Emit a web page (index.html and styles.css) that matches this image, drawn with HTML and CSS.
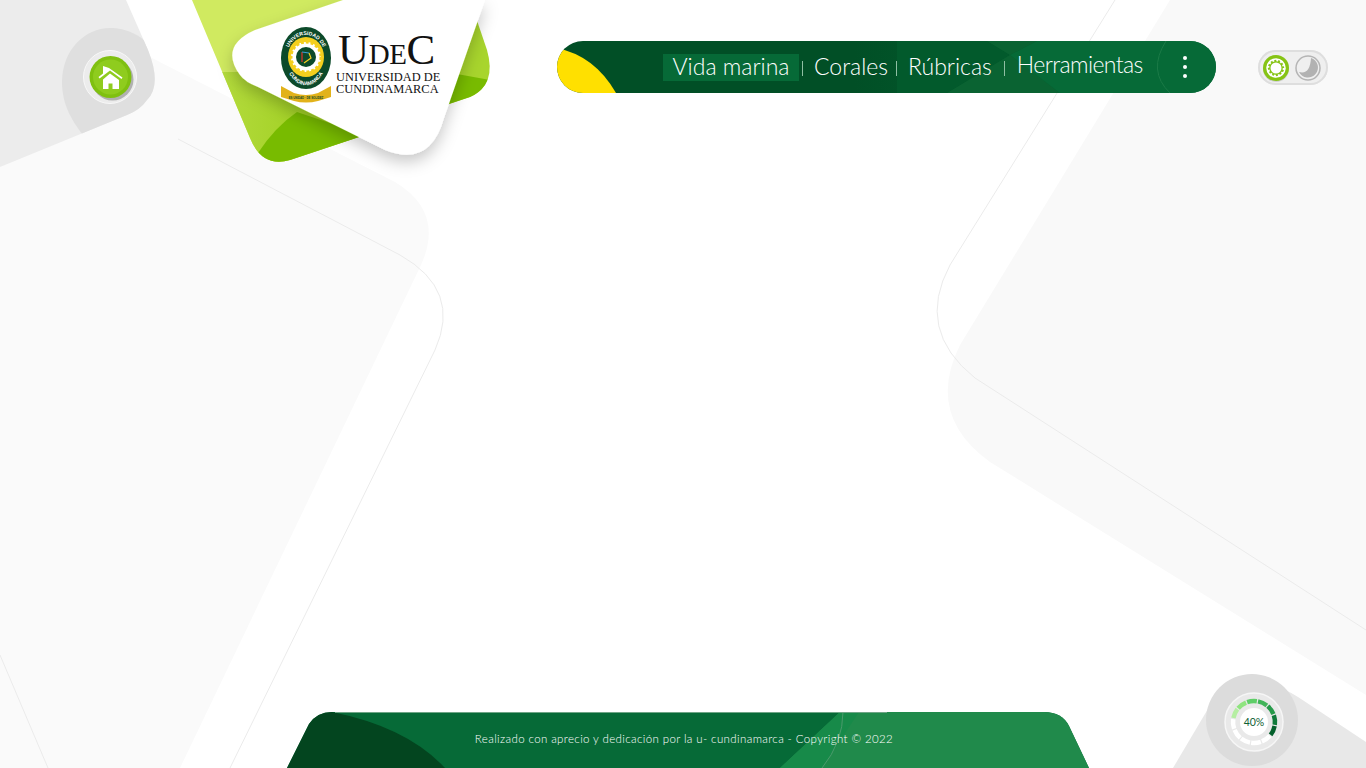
FILE: index.html
```html
<!DOCTYPE html>
<html lang="es">
<head>
  <meta charset="UTF-8" />
  <meta name="viewport" content="width=device-width, initial-scale=1.0"/>
  <title>Vida marina - UDEC</title>
  <link rel="stylesheet" href="styles.css">
</head>
<body>
  <svg class="fondo" viewBox="0 0 1366 768" aria-hidden="true">
    <defs>
      <clipPath id="clipEsquina"><path d="M0 0H126L148 50Q162 85 147 100Q140 110 127 115L0 167Z"/></clipPath>
      <clipPath id="clipVerde"><path d="M192 0H380V130L290 160Q262 168 250 138Z"/></clipPath>
      <clipPath id="clipVerde2"><path d="M470 0L487 50Q497 85 470 97L440 107V0Z"/></clipPath>
      <linearGradient id="gradBanda" x1="0" y1="0" x2="1" y2="0">
        <stop offset="0" stop-color="#b9de45"/>
        <stop offset="0.5" stop-color="#a6d32a"/>
        <stop offset="1" stop-color="#97c920"/>
      </linearGradient>
      <filter id="sombraLogo" x="-20%" y="-20%" width="140%" height="150%">
        <feDropShadow dx="0" dy="7" stdDeviation="8" flood-color="#000" flood-opacity="0.22"/>
      </filter>
    </defs>

    <path fill="#fafafa" d="M150 57L395 182Q445 212 421 265L180 768H0V167Z"/>
    <path fill="none" stroke="#ebebeb" d="M178 139L400 255Q462 290 435 350L230 768"/>
    <path fill="none" stroke="#ebebeb" d="M0 655L48 768"/>
    <path fill="#ececec" d="M0 0H126L148 50Q162 85 147 100Q140 110 127 115L0 167Z"/>
    <path fill="#dfdfdf" clip-path="url(#clipEsquina)" d="M62 82C62 50 85 28 110 28C130 28 160 40 160 80V140H87C72 122 62 105 62 82Z"/>

    <path fill="#f9f9f9" d="M1170 0H1366V695L990 462Q925 415 960 345Z"/>
    <path fill="none" stroke="#ebebeb" d="M1115 0L950 265Q915 330 975 378L1366 630"/>
    <path fill="#e8e8e8" d="M1173 768L1215 697Q1255 670 1298 697L1366 742V768Z"/>
    <circle fill="#dcdcdc" cx="1252" cy="720" r="46"/>

    <path fill="#d0ea60" d="M192 0H380V130L290 160Q262 168 250 138Z"/>
    <g clip-path="url(#clipVerde)">
      <rect x="190" y="72" width="190" height="100" fill="url(#gradBanda)"/>
      <path fill="#78bb00" d="M258 153Q275 127 297 112L380 140L300 175L250 170Z"/>
    </g>
    <path fill="#a8d52d" d="M470 0L487 50Q497 85 470 97L440 107V0Z"/>
    <path fill="#78bb00" clip-path="url(#clipVerde2)" d="M440 110L457 74L490 80V110Z"/>
    <path fill="#fff" filter="url(#sombraLogo)" d="M343 0L255 30Q219 46 240 75Q245 82 258 87L385 150Q430 168 444 118L485 0Z"/>
  </svg>

  <header class="cabecera">
    <a class="inicio" href="#" aria-label="Inicio">
      <svg viewBox="0 0 54 54" width="54" height="54">
        <circle cx="27" cy="27" r="26.500" fill="#ececec" stroke="#f8f8f8"/>
        <circle cx="29.500" cy="29.500" r="21" fill="#8a8a8a" opacity="0.6"/>
        <circle cx="27.500" cy="27" r="21" fill="#7fc010"/>
        <circle cx="27.500" cy="27" r="17.500" fill="#8fcc1e"/>
        <path fill="#fff" d="M20 16L26 18L39.500 27.500L38.500 29L27 20.500L16.500 28.500L15.500 27L20 23.500Z"/>
        <path fill="#fff" d="M20 29.500L27 23.500L36 30V39H29.500V33.500H25.500V39H20Z"/>
      </svg>
    </a>

    <div class="marca">
      <svg class="escudo" viewBox="0 0 52 78" width="52" height="78">
        <defs>
          <path id="arcoSup" d="M6.500 33A19.500 24 0 0 1 45.500 33"/>
          <path id="arcoInf" d="M4 38Q14 60 26 59Q38 60 48 38"/>
        </defs>
        <ellipse cx="26" cy="32" rx="25" ry="31" fill="#0c4a2a"/>
        <ellipse cx="26" cy="31" rx="18" ry="20" fill="#f4cf1e"/>
        <circle cx="26" cy="31" r="15" fill="#fff" stroke="#f4cf1e" stroke-width="3" stroke-dasharray="3 2"/>
        <circle cx="26" cy="31" r="10" fill="#0c4a2a"/>
        <path fill="none" stroke="#e5322d" stroke-width="1.200" d="M22 26V36"/>
        <path fill="none" stroke="#3a9fd8" stroke-width="1.200" d="M22 26L29 27"/>
        <path fill="none" stroke="#f4cf1e" stroke-width="1.200" d="M29 27L31 32L24 37"/>
        <text class="escudo-txt"><textPath href="#arcoSup" startOffset="50%">UNIVERSIDAD DE</textPath></text>
        <text class="escudo-txt"><textPath href="#arcoInf" startOffset="50%">CUNDINAMARCA</textPath></text>
        <path fill="#e2b21a" d="M1 60L14 67Q26 71 38 67L51 60V71L38 75Q26 78 14 75L1 71Z"/>
        <text class="escudo-lema" x="26" y="72.500">ES UNIDAD · DE SOLIDEZ</text>
      </svg>
      <div class="marca-texto">
        <div class="udec">U<span>DE</span>C</div>
        <div class="udec-nombre">UNIVERSIDAD DE</div>
        <div class="udec-nombre">CUNDINAMARCA</div>
      </div>
    </div>

    <nav class="menu">
      <svg class="menu-fondo" viewBox="0 0 659 52" width="659" height="52" aria-hidden="true">
        <defs>
          <linearGradient id="gradMenu" x1="0" y1="0" x2="1" y2="0">
            <stop offset="0.45" stop-color="#014f26"/>
            <stop offset="0.65" stop-color="#025a2c"/>
            <stop offset="0.8" stop-color="#066a37"/>
          </linearGradient>
        </defs>
        <rect width="659" height="52" fill="url(#gradMenu)"/>
        <path fill="#025a2c" d="M340 0H430L453 14L390 52H340Z"/>
        <path fill="#0a6332" d="M390 52L453 14L430 0H480L453 14L503 52Z"/>
        <path fill="#066a37" d="M480 0H659V52H503L453 14Z"/>
        <path fill="#ffe000" d="M0 7Q38 15 59 52H0Z"/>
        <path fill="none" stroke="#1b7a47" d="M609 0Q590 30 613 52"/>
      </svg>
      <a class="activo" href="#">Vida marina</a>
      <span class="sep sep-activo"></span>
      <a href="#">Corales</a>
      <span class="sep sep-corales"></span>
      <a href="#">Rúbricas</a>
      <span class="sep sep-rubricas"></span>
      <a class="alto" href="#">Herramientas</a>
      <button class="puntos" type="button" aria-label="Más"><i></i><i></i><i></i></button>
    </nav>

    <div class="tema">
      <svg viewBox="0 0 70 35" width="70" height="35">
        <circle cx="18" cy="19" r="13" fill="#999" opacity="0.35"/>
        <circle cx="18" cy="18" r="13" fill="#86c414"/>
        <circle cx="18" cy="18" r="9" fill="none" stroke="#fff" stroke-width="1.500"/>
        <circle cx="18" cy="18" r="5.500" fill="#fff"/>
        <circle cx="18" cy="18" r="8" fill="none" stroke="#fff" stroke-width="2.500" stroke-dasharray="2 2.200"/>
        <circle cx="50" cy="18" r="12" fill="#efefef" stroke="#b5b5b5" stroke-width="1.500"/>
        <path fill="#b2b2b2" d="M53 8A10 10 0 1 1 41 22Q52 25 53 8Z"/>
      </svg>
    </div>
  </header>

  <main class="contenido"></main>

  <footer class="pie">
    <svg class="pie-fondo" viewBox="0 0 802 56" width="802" height="56" aria-hidden="true">
      <path fill="#066a37" d="M0 56L22 12Q30 0 45 0H757Q775 0 782 14L802 56Z"/>
      <path fill="#03451f" d="M0 56L22 12Q30 0 45 0Q120 15 158 56Z"/>
      <path fill="#208a4b" d="M553 0H757Q775 0 782 14L802 56H493Z"/>
      <path fill="#178a49" d="M493 56L553 0H572L535 56Z"/>
      <path fill="none" stroke="#4b9a6c" d="M556 0Q556 30 535 56"/>
      <path fill="none" stroke="#6fa586" d="M48 0.500H600"/>
    </svg>
    <p>Realizado con aprecio y dedicación por la u- cundinamarca - Copyright © 2022</p>
  </footer>

  <div class="avance">
    <svg viewBox="0 0 60 60" width="60" height="60">
      <circle cx="30" cy="30" r="29" fill="#e9e9e9" stroke="#f6f6f6" stroke-width="1.500"/>
      <g fill="none" stroke-width="4.500" stroke-dasharray="9.800 122">
        <circle cx="30" cy="30" r="21" stroke="#b5eea2" transform="rotate(-169 30 30)"/>
        <circle cx="30" cy="30" r="21" stroke="#8fe47f" transform="rotate(-139 30 30)"/>
        <circle cx="30" cy="30" r="21" stroke="#5fce68" transform="rotate(-109 30 30)"/>
        <circle cx="30" cy="30" r="21" stroke="#41b559" transform="rotate(-79 30 30)"/>
        <circle cx="30" cy="30" r="21" stroke="#279a4a" transform="rotate(-49 30 30)"/>
        <circle cx="30" cy="30" r="21" stroke="#0f7a3a" transform="rotate(-19 30 30)"/>
        <circle cx="30" cy="30" r="21" stroke="#04602c" transform="rotate(11 30 30)"/>
        <circle cx="30" cy="30" r="21" stroke="#fff" transform="rotate(41 30 30)"/>
        <circle cx="30" cy="30" r="21" stroke="#fff" transform="rotate(71 30 30)"/>
        <circle cx="30" cy="30" r="21" stroke="#fff" transform="rotate(101 30 30)"/>
        <circle cx="30" cy="30" r="21" stroke="#fff" transform="rotate(131 30 30)"/>
        <circle cx="30" cy="30" r="21" stroke="#fff" transform="rotate(161 30 30)"/>
      </g>
      <circle cx="30" cy="30" r="14" fill="#fff"/>
    </svg>
    <span>40%</span>
  </div>
</body>
</html>
```

FILE: styles.css
```css
html, body { margin: 0; height: 100%; }
body {
  position: relative;
  display: flex;
  flex-direction: column;
  height: 100vh;
  overflow: hidden;
  background: #fff;
  font-family: Lato, "Open Sans", sans-serif;
}
.fondo { position: absolute; left: 0; top: 0; width: 1366px; height: 768px; }

.cabecera {
  position: relative;
  display: flex;
  align-items: flex-start;
  padding: 0 38px 0 83px;
}
.inicio { display: block; width: 54px; height: 54px; margin-top: 50px; }

.marca {
  display: flex;
  align-items: flex-start;
  gap: 4px;
  width: 161px;
  margin: 26px 0 0 143px;
}
.escudo { flex: none; }
.escudo-txt { font: bold 5.200px "Liberation Sans", sans-serif; fill: #fff; text-anchor: middle; }
.escudo-lema { font: bold 2.800px "Liberation Sans", sans-serif; fill: #0c4a2a; text-anchor: middle; }
.marca-texto { font-family: "Liberation Serif", serif; color: #111; padding-top: 2px; }
.udec { margin: 0 0 -4px 2px; font-size: 43px; line-height: 44px; letter-spacing: -0.4px; white-space: nowrap; }
.udec span { font-size: 29px; }
.udec-nombre { font-size: 12.400px; line-height: 11.500px; white-space: nowrap; }

.menu {
  position: relative;
  display: flex;
  align-items: center;
  flex: none;
  width: 659px;
  height: 52px;
  margin: 41px 0 0 116px;
  border-radius: 26px;
  overflow: hidden;
  box-sizing: border-box;
  padding-left: 106px;
}
.menu-fondo { position: absolute; left: 0; top: 0; }
.menu a {
  position: relative;
  padding-bottom: 2px;
  color: #fff;
  font-size: 23px;
  font-weight: 300;
  line-height: 25px;
  text-decoration: none;
  white-space: nowrap;
}
.menu a.activo { width: 136px; text-align: center; background: #066a37; }
.menu a.alto { margin-top: -4px; letter-spacing: -0.6px; }
.sep { position: relative; flex: none; width: 1px; height: 15px; margin: 3px 11px 0; background: #8fbfa3; }
.sep-activo { margin-left: 3px; }
.sep-corales { margin-left: 8px; }
.sep-rubricas { margin-left: 12px; margin-right: 12px; }
.puntos {
  position: absolute;
  right: 29px;
  top: 15px;
  display: flex;
  flex-direction: column;
  gap: 5px;
  padding: 0;
  border: none;
  background: none;
}
.puntos i { display: block; width: 4px; height: 4px; border-radius: 50%; background: #fff; }

.tema {
  flex: none;
  width: 70px;
  height: 35px;
  margin: 50px 0 0 42px;
  border-radius: 18px;
  background: #efefef;
  box-shadow: inset 0 0 0 2px #dedede;
}

.contenido { flex: 1; }

.pie {
  position: relative;
  flex: none;
  width: 802px;
  height: 56px;
  margin-left: 287px;
}
.pie-fondo { position: absolute; left: 0; top: 0; }
.pie p {
  position: relative;
  margin: 0;
  padding: 20px 8px 0 0;
  text-align: center;
  color: #fff;
  font-size: 11.500px;
  font-weight: 300;
  line-height: 14px;
  letter-spacing: 0.38px;
}

.avance {
  position: absolute;
  left: 1224px;
  top: 692px;
  width: 60px;
  height: 60px;
}
.avance span {
  position: absolute;
  left: 0;
  right: 0;
  top: 23px;
  text-align: center;
  color: #0f5f34;
  font-size: 10.500px;
  line-height: 14px;
}
```
